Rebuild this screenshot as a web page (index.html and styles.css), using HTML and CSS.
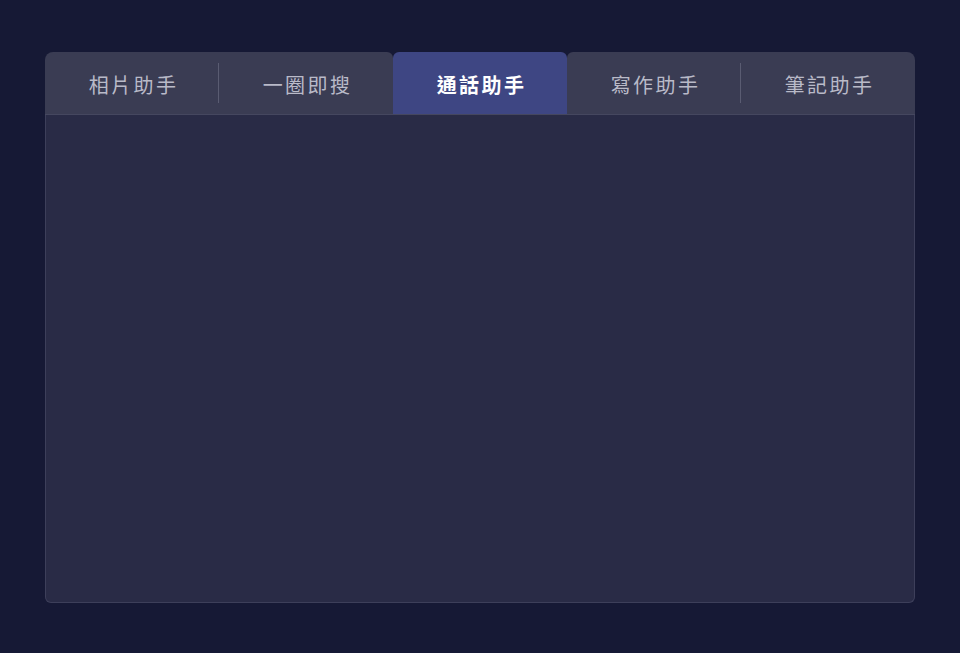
FILE: index.html
```html
<!DOCTYPE html>
<html lang="zh-Hant">
<head>
<meta charset="utf-8">
<link rel="stylesheet" href="styles.css">
</head>
<body>
<div class="card">
  <div class="tabs">
    <div class="tab">相片助手<span class="divider"></span></div>
    <div class="tab before-active">一圈即搜</div>
    <div class="tab active">通話助手</div>
    <div class="tab after-active">寫作助手<span class="divider"></span></div>
    <div class="tab">筆記助手</div>
  </div>
  <div class="panel"></div>
</div>
</body>
</html>
```
FILE: styles.css
```css
html, body {
  margin: 0;
  padding: 0;
  background: #161935;
  height: 100%;
}
body {
  font-family: "Noto Sans CJK TC", "Noto Sans", sans-serif;
  padding: 52px 45px 50px 45px;
  box-sizing: border-box;
}
.card {
  width: 870px;
  height: 551px;
  display: flex;
  flex-direction: column;
}
.tabs {
  display: flex;
  height: 62px;
  background: #161935;
  border-bottom: 1px solid #45475f;
}
.tab {
  flex: 1;
  position: relative;
  display: flex;
  align-items: center;
  justify-content: center;
  background: #3a3c53;
  color: #b9bac8;
  font-size: 20px;
  letter-spacing: 2.4px;
  padding: 2px 0 0 3px;
}
.tab:first-child { border-top-left-radius: 8px; }
.tab:last-child { border-top-right-radius: 8px; }
.before-active { border-top-right-radius: 6px; }
.after-active { border-top-left-radius: 6px; }
.tab.active {
  background: #3e4683;
  color: #ffffff;
  font-weight: 700;
  border-radius: 6px 6px 0 0;
}
.divider {
  position: absolute;
  right: 0;
  top: 11px;
  bottom: 11px;
  width: 1px;
  background: #5a5c72;
}
.panel {
  flex: 1;
  background: #292b46;
  border: 1px solid #3d3f5a;
  border-top: none;
  border-radius: 0 0 6px 6px;
}
```
